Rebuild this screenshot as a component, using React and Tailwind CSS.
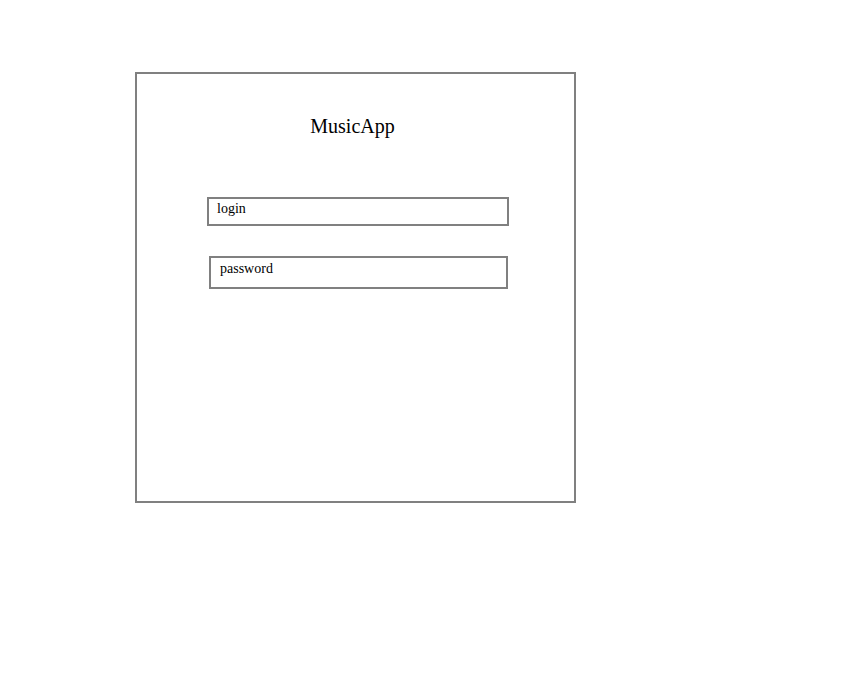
export default function App() {
  return (
    <div className="min-h-[676px] bg-white pt-[72px] pl-[135px]" style={{ fontFamily: '"Liberation Serif", "Times New Roman", serif' }}>
      <div className="w-[441px] h-[431px] border-2 border-[#808080] flex flex-col">
        <h1 className="mt-[41px] pr-[6px] text-center text-[20px] leading-[23px] text-black">MusicApp</h1>

        <div className="mt-[59px] ml-[70px] w-[302px] h-[29px] border-2 border-[#808080] pl-[8px] pt-[2px] text-[14px] leading-[16px] text-black">
          login
        </div>

        <div className="mt-[30px] ml-[72px] w-[299px] h-[33px] border-2 border-[#808080] pl-[9px] pt-[3px] text-[14px] leading-[16px] text-black">
          password
        </div>
      </div>
    </div>
  )
}
